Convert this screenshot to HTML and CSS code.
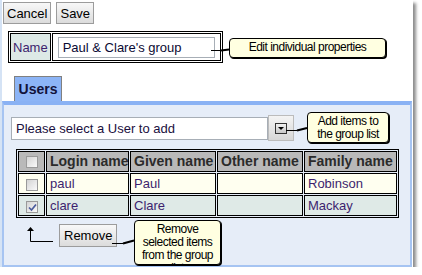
FILE: index.html
```html
<!DOCTYPE html>
<html lang="en">
<head>
  <meta charset="UTF-8" />
  <title>Group properties</title>
  <link rel="stylesheet" href="styles.css">
</head>
<body>

  <div class="frame">
    <div class="toolbar">
      <button class="btn">Cancel</button>
      <button class="btn">Save</button>
    </div>

    <table class="props">
      <tr>
        <td class="label">Name</td>
        <td class="field"><input class="text-input" type="text" value="Paul &amp; Clare's group"></td>
      </tr>
    </table>

    <div class="tabs">
      <span class="tab">Users</span>
    </div>

    <div class="panel">
      <div class="picker">
        <div class="picker-box">Please select a User to add</div>
        <button class="picker-btn"><span class="drop-icon"></span></button>
      </div>

      <table class="grid">
        <tr class="head">
          <th class="check"><span class="cb"></span></th>
          <th class="c-login">Login name</th>
          <th class="c-given">Given name</th>
          <th class="c-other">Other name</th>
          <th class="c-family">Family name</th>
        </tr>
        <tr class="odd">
          <td class="check"><span class="cb"></span></td>
          <td>paul</td>
          <td>Paul</td>
          <td></td>
          <td>Robinson</td>
        </tr>
        <tr class="even">
          <td class="check">
            <span class="cb">
              <svg width="11" height="11" viewBox="0 0 11 11"><path d="M2 5.5 L4.5 8 L9 2.5" fill="none" stroke="#4a5c9c" stroke-width="1.7"/></svg>
            </span>
          </td>
          <td>clare</td>
          <td>Clare</td>
          <td></td>
          <td>Mackay</td>
        </tr>
      </table>

      <div class="actions">
        <svg class="up-arrow" width="30" height="20" viewBox="0 0 30 20">
          <path d="M4.5 4 V15.5 H27" fill="none" stroke="#000" stroke-width="1"/>
          <polygon points="4.5,1 1,5 8,5" fill="#000"/>
        </svg>
        <button class="btn">Remove</button>
      </div>
    </div>

    <!-- callout leader lines -->
    <svg class="leaders" width="413" height="267">
      <line x1="211" y1="50.5" x2="221" y2="50.5" stroke="#000" stroke-width="1"/>
      <line x1="221" y1="50.5" x2="229" y2="49.5" stroke="#000" stroke-width="2"/>
      <line x1="286" y1="130.5" x2="297" y2="130.5" stroke="#000" stroke-width="1"/>
      <line x1="297" y1="130.5" x2="307" y2="128" stroke="#000" stroke-width="2"/>
      <line x1="112" y1="243.5" x2="123" y2="243.5" stroke="#000" stroke-width="1"/>
      <line x1="123" y1="243.5" x2="134" y2="240.5" stroke="#000" stroke-width="2"/>
    </svg>

    <div class="callout c-name">Edit individual properties</div>
    <div class="callout c-add">Add items to<br>the group list</div>
    <div class="callout c-remove">Remove<br>selected items<br>from the group<br>list</div>
  </div>

</body>
</html>
```

FILE: styles.css
```css
body {
  margin: 0;
  background: #fff;
  font-family: "Liberation Sans", Arial, sans-serif;
}
.frame {
  position: relative;
  width: 413px;
  height: 267px;
  box-sizing: border-box;
  padding-left: 2px;
  background: linear-gradient(to right, #d5e3f5 0, #d5e3f5 2px, #fff 2px);
  box-shadow: 3px 3px 3px rgba(0,0,0,0.45);
  display: flex;
  flex-direction: column;
  align-items: flex-start;
}
.toolbar {
  display: flex;
  gap: 5px;
  padding: 2px 0 0 1px;
}
.btn {
  height: 22px;
  padding: 0 3px;
  border: 1px solid #9c9c9c;
  background: linear-gradient(#f8f8f8, #dcdcdc);
  font-family: "Liberation Sans", Arial, sans-serif;
  font-size: 13px;
  color: #000;
  cursor: pointer;
}

/* name row */
.props {
  margin: 7px 0 0 6px;
  border: 1px solid #000;
  border-spacing: 1px;
}
.props td {
  border: 1px solid #000;
}
.label {
  background: #dde9e6;
  padding: 0 2px;
  font-size: 13px;
  color: #3d1f6e;
}
.field {
  padding: 3px 5px 2px;
}
.text-input {
  display: block;
  width: 157px;
  height: 21px;
  box-sizing: border-box;
  border: 1px solid #a7aeb6;
  padding: 0 4px;
  font-family: "Liberation Sans", Arial, sans-serif;
  font-size: 13px;
  color: #0a0a33;
  outline: none;
}

/* tab + panel */
.tabs {
  display: flex;
  margin: 13px 0 0 12px;
}
.tab {
  display: block;
  width: 48px;
  height: 25px;
  box-sizing: border-box;
  border: 1px solid #808080;
  border-bottom: none;
  background: #8cb4f6;
  font-size: 14px;
  font-weight: bold;
  line-height: 24px;
  text-align: center;
  color: #12123a;
}
.panel {
  flex: 1;
  align-self: stretch;
  margin-right: 1px;
  border: 2px solid #a6c4f2;
  border-top: 4px solid #8ab2f4;
  background: #e6edf8;
  padding-top: 10px;
}
.picker {
  display: flex;
  align-items: center;
  height: 26px;
  margin-left: 7px;
}
.picker-box {
  width: 257px;
  height: 23px;
  box-sizing: border-box;
  border: 1px solid #a7aeb6;
  background: #fff;
  padding-left: 4px;
  font-size: 13px;
  line-height: 21px;
  color: #1a1040;
}
.picker-btn {
  width: 26px;
  height: 26px;
  padding: 0;
  border: 1px solid #bcbcbc;
  background: linear-gradient(#f4f4f4, #d6d6d6);
  display: flex;
  align-items: center;
  justify-content: center;
}
.drop-icon {
  width: 12px;
  height: 11px;
  box-sizing: border-box;
  border: 1px solid #333;
  background: linear-gradient(#f0f0f0, #c8c8c8);
  display: flex;
  align-items: center;
  justify-content: center;
}
.drop-icon::after {
  content: "";
  border-left: 3px solid transparent;
  border-right: 3px solid transparent;
  border-top: 3px solid #000;
}

/* users grid */
.grid {
  margin: 8px 0 0 12px;
  width: 383px;
  table-layout: fixed;
  border: 1px solid #000;
  border-spacing: 1px;
}
.grid th, .grid td {
  box-sizing: border-box;
  border: 1px solid #000;
  padding: 0 3px;
  line-height: 19px;
  text-align: left;
  white-space: nowrap;
  overflow: hidden;
}
.grid th {
  background: #b9b9b9;
  font-size: 14px;
  font-weight: bold;
  color: #2b2b2b;
}
.grid td {
  font-size: 13px;
  color: #3d1f6e;
}
.grid .check {
  width: 27px;
  padding: 0;
  text-align: center;
}
.c-login { width: 83px; }
.c-given { width: 86px; }
.c-other { width: 86px; }
.c-family { width: 93px; }
.odd td { background: #fffff0; }
.even td { background: #dfeae7; }
.cb {
  display: inline-block;
  vertical-align: middle;
  width: 12px;
  height: 12px;
  box-sizing: border-box;
  border: 1px solid #9a9a9a;
  background: linear-gradient(135deg, #d4d4d4, #fafafa);
  line-height: 0;
}

.actions {
  display: flex;
  align-items: flex-start;
  margin-top: 6px;
}
.up-arrow {
  margin: 2px 0 0 22px;
}
.actions .btn {
  height: 23px;
  margin-left: 3px;
  padding: 0 4px;
}

/* callouts */
.leaders {
  position: absolute;
  left: 0;
  top: 0;
  pointer-events: none;
}
.callout {
  position: absolute;
  box-sizing: border-box;
  background: #ffffe1;
  border: 1px solid #000;
  border-radius: 4px;
  box-shadow: 1px 1px 0 #000;
  font-size: 12px;
  letter-spacing: -0.5px;
  line-height: 13px;
  text-align: center;
  color: #000;
  overflow: hidden;
}
.c-name {
  left: 229px;
  top: 38px;
  width: 157px;
  height: 20px;
  line-height: 17px;
}
.c-add {
  left: 307px;
  top: 112px;
  width: 82px;
  height: 31px;
  padding-top: 2px;
}
.c-remove {
  left: 134px;
  top: 220px;
  width: 87px;
  height: 45px;
  padding-top: 2px;
}
```
